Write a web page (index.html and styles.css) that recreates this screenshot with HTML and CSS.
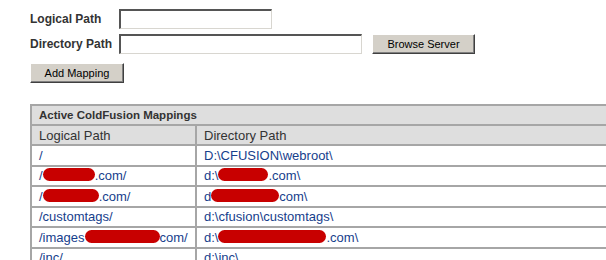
FILE: index.html
```html
<!DOCTYPE html>
<html lang="en">

<head>
    <meta charset="UTF-8">
    <title>ColdFusion Mappings</title>
    <link rel="stylesheet" href="styles.css">
</head>

<body>
    <form class="mapform">
        <div class="field">
            <label class="label">Logical Path</label>
            <input type="text" class="txt short">
        </div>
        <div class="field">
            <label class="label">Directory Path</label>
            <input type="text" class="txt long">
            <button type="button" class="btn browse">Browse Server</button>
        </div>
        <div class="actions">
            <button type="button" class="btn add">Add Mapping</button>
        </div>
    </form>

    <div class="tablewrap">
        <table class="mappings">
            <tr class="title">
                <th colspan="2">Active ColdFusion Mappings</th>
            </tr>
            <tr class="head">
                <th class="col1">Logical Path</th>
                <th>Directory Path</th>
            </tr>
            <tr>
                <td>/</td>
                <td>D:\CFUSION\webroot\</td>
            </tr>
            <tr>
                <td>/<span class="redact w52"></span>.com/</td>
                <td>d:\<span class="redact w50"></span>.com\</td>
            </tr>
            <tr>
                <td>/<span class="redact w56"></span>.com/</td>
                <td>d<span class="redact w68"></span>com\</td>
            </tr>
            <tr>
                <td>/customtags/</td>
                <td>d:\cfusion\customtags\</td>
            </tr>
            <tr>
                <td>/images<span class="redact w75"></span>com/</td>
                <td>d:\<span class="redact w108"></span>.com\</td>
            </tr>
            <tr>
                <td>/inc/</td>
                <td>d:\inc\</td>
            </tr>
        </table>
    </div>
</body>

</html>
```

FILE: styles.css
```css
html {
    overflow: hidden;
}

body {
    margin: 0;
    font-family: "Liberation Sans", Arial, sans-serif;
    color: #333;
    background: #fff;
}

.mapform {
    padding: 9px 0 0 30px;
}

.field {
    display: flex;
    align-items: center;
    margin-bottom: 4px;
}

.label {
    width: 89px;
    font-size: 12px;
    font-weight: bold;
    color: #333;
}

.txt {
    box-sizing: border-box;
    height: 20px;
    margin: 0;
    padding: 0 3px;
    border-style: solid;
    border-width: 2px 1px 1px 2px;
    border-color: #555 #d8d6d0 #d8d6d0 #555;
    background: #fff;
    font: 12px "Liberation Sans", Arial, sans-serif;
    outline: none;
}

.txt.short {
    width: 153px;
}

.txt.long {
    width: 243px;
}

.btn {
    box-sizing: border-box;
    height: 20px;
    margin: 0;
    padding: 0;
    border: 1px solid;
    border-color: #fff #404040 #404040 #fff;
    box-shadow: inset -1px -1px #808080;
    background: #d4d0c8;
    font: 11px "Liberation Sans", Arial, sans-serif;
    color: #000;
}

.btn.browse {
    width: 103px;
    margin-left: 10px;
    margin-top: 1px;
}

.btn.add {
    width: 94px;
}

.actions {
    margin-top: 9px;
}

.tablewrap {
    margin: 21px 0 0 30px;
    overflow: hidden;
}

.mappings {
    width: 640px;
    border-collapse: collapse;
    font-size: 13px;
}

.mappings th,
.mappings td {
    border: 2px solid #a6a6a6;
    padding: 0 7px;
    text-align: left;
    white-space: nowrap;
}

.mappings .title th {
    height: 18px;
    background: #dedede;
    font-weight: bold;
    font-size: 11.5px;
    color: #333;
}

.mappings .head th {
    height: 18px;
    background: #dedede;
    font-weight: normal;
    font-size: 13px;
    color: #333;
}

.mappings .col1 {
    width: 149px;
}

.mappings td {
    height: 18.5px;
    color: #16408c;
}

.redact {
    display: inline-block;
    height: 13px;
    vertical-align: -1px;
    background: #c80000;
    border-radius: 7px;
}

.w50 { width: 50px; }
.w52 { width: 52px; }
.w56 { width: 56px; }
.w68 { width: 68px; }
.w75 { width: 75px; }
.w108 { width: 108px; }
```
